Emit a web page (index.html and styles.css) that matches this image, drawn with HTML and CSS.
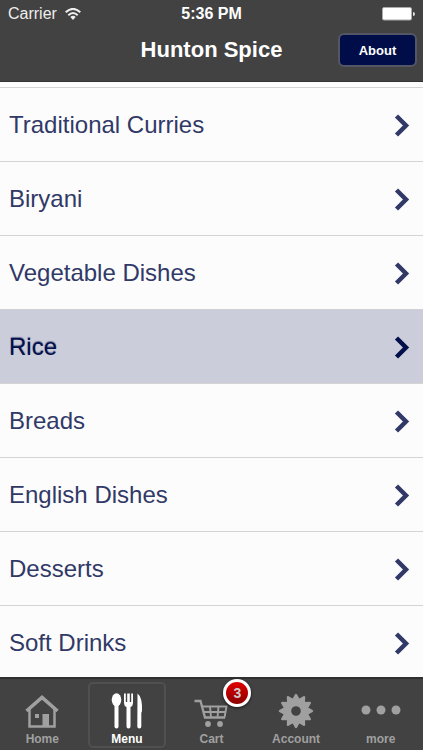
FILE: index.html
```html
<!DOCTYPE html>
<html lang="en">
<head>
<meta charset="utf-8">
<meta name="viewport" content="width=device-width, initial-scale=1">
<title>Hunton Spice</title>
<link rel="stylesheet" href="styles.css">
</head>
<body>
<svg class="defs" aria-hidden="true">
  <symbol id="chevron" viewBox="0 0 16 24"><path d="M2.500 3 12 12.500 2.500 22" fill="none" stroke="currentColor" stroke-width="4.500"/></symbol>
</svg>
<header class="header">
  <div class="status">
    <span class="carrier">Carrier
      <svg class="wifi" viewBox="0 0 16 12" aria-hidden="true"><g fill="none" stroke="currentColor" stroke-width="2"><path d="M.7 4.300Q8-2.500 15.300 4.300"/><path d="M3.300 7.200Q8 2.800 12.700 7.200"/></g><path d="M5.300 9Q8 6.600 10.700 9L8 11.900Z" fill="currentColor"/></svg>
    </span>
    <span class="time">5:36 PM</span>
    <svg class="battery" viewBox="0 0 33 14" aria-hidden="true"><rect x=".5" y=".5" width="29" height="12.500" rx="1.500" fill="#fff" stroke="#aaa"/><path d="M31 5q2 0 2 2t-2 2z" fill="#ddd"/></svg>
  </div>
  <div class="titlebar">
    <h1 class="title">Hunton Spice</h1>
    <button class="about" type="button">About</button>
  </div>
</header>
<main class="list">
  <a class="row" href="#"><span>Traditional Curries</span><svg class="chevron" aria-hidden="true"><use href="#chevron"/></svg></a>
  <a class="row" href="#"><span>Biryani</span><svg class="chevron" aria-hidden="true"><use href="#chevron"/></svg></a>
  <a class="row" href="#"><span>Vegetable Dishes</span><svg class="chevron" aria-hidden="true"><use href="#chevron"/></svg></a>
  <a class="row selected" href="#"><span>Rice</span><svg class="chevron" aria-hidden="true"><use href="#chevron"/></svg></a>
  <a class="row" href="#"><span>Breads</span><svg class="chevron" aria-hidden="true"><use href="#chevron"/></svg></a>
  <a class="row" href="#"><span>English Dishes</span><svg class="chevron" aria-hidden="true"><use href="#chevron"/></svg></a>
  <a class="row" href="#"><span>Desserts</span><svg class="chevron" aria-hidden="true"><use href="#chevron"/></svg></a>
  <a class="row" href="#"><span>Soft Drinks</span><svg class="chevron" aria-hidden="true"><use href="#chevron"/></svg></a>
</main>
<nav class="tabs">
  <a class="tab" href="#">
    <svg class="icon" viewBox="0 0 36 36" aria-hidden="true"><path d="M2.500 18 18 4.500 33.500 18" fill="none" stroke="currentColor" stroke-width="3.600"/><path d="M5.500 16V33.500H30.500V16" fill="none" stroke="currentColor" stroke-width="2.500"/><path d="M18.500 21h6.500v12.500h-6.500zM11 21h4v4h-4z" fill="currentColor"/></svg>
    <span>Home</span>
  </a>
  <a class="tab active" href="#" aria-current="page">
    <svg class="icon" viewBox="0 0 36 36" aria-hidden="true"><g fill="currentColor"><ellipse cx="7.500" cy="6.800" rx="4.800" ry="6.500"/><rect x="5.500" y="9" width="4" height="26.500" rx="2"/><path d="M15 .5h1.800v8.500h1.400V.5h2.600v8.500h1.400V.5H24v9.500q0 3-2.500 4V33.500a2 2 0 0 1-4 0V14Q15 13 15 10zM28.500 .5Q33.500 4 33 18l-.7 2V33.500a2 2 0 0 1-4 0z"/></g></svg>
    <span>Menu</span>
  </a>
  <a class="tab" href="#">
    <span class="cart">
      <svg class="icon" viewBox="0 0 36 36" aria-hidden="true"><g fill="none" stroke="currentColor" stroke-width="1.900"><path d="M1.500 8H7.500L12 24.500H32" stroke-width="2.300"/><path d="M9 13.500H33.500L31.500 24.500M10.500 19H32.500M17 13.500l1 11M25.500 13.500l-1 11"/></g><circle cx="15" cy="31" r="2.900" fill="currentColor"/><circle cx="27" cy="31" r="2.900" fill="currentColor"/></svg>
      <span class="badge">3</span>
    </span>
    <span>Cart</span>
  </a>
  <a class="tab" href="#">
    <svg class="icon" viewBox="-18 -18 36 36" aria-hidden="true"><path d="M0-16 2.900-10.700 8-13.800 7.800-7.800 13.800-8 10.700-2.900 16 0 10.700 2.900 13.800 8 7.800 7.800 8 13.800 2.900 10.700 0 16-2.900 10.700-8 13.800-7.800 7.800-13.800 8-10.700 2.900-16 0-10.700-2.900-13.800-8-7.800-7.800-8-13.800-2.900-10.700ZM6 0A6 6 0 1 0-6 0 6 6 0 1 0 6 0Z" fill="currentColor" fill-rule="evenodd" stroke="currentColor" stroke-width="2.400" stroke-linejoin="round"/></svg>
    <span>Account</span>
  </a>
  <a class="tab" href="#">
    <svg class="icon dots" viewBox="0 0 40 36" aria-hidden="true"><g fill="currentColor"><circle cx="5" cy="17" r="4.500"/><circle cx="20" cy="17" r="4.500"/><circle cx="35" cy="17" r="4.500"/></g></svg>
    <span>more</span>
  </a>
</nav>
</body>
</html>
```
FILE: styles.css
```css
* { box-sizing: border-box; }
body {
  margin: 0;
  height: 100vh;
  display: flex;
  flex-direction: column;
  overflow: hidden;
  background: #fcfcfc;
  font-family: "Liberation Sans", Arial, sans-serif;
}
a { color: inherit; text-decoration: none; }
.defs { display: none; }
.header { flex: none; background: #424242; color: #fff; border-bottom: 1px solid #333; padding-bottom: 14px; }
.status {
  display: grid;
  grid-template-columns: 1fr auto 1fr;
  align-items: center;
  height: 28px;
  padding: 0 8px;
  font-size: 16px;
}
.carrier { display: flex; align-items: center; gap: 8px; color: #eee; }
.wifi { width: 16px; height: 12px; }
.time { font-weight: bold; }
.battery { width: 33px; height: 14px; justify-self: end; }
.titlebar {
  display: grid;
  grid-template-columns: 1fr auto 1fr;
  align-items: center;
  padding: 5px 6px 0;
}
.title { grid-column: 2; margin: 0; font-size: 22px; line-height: 28px; }
.about {
  justify-self: end;
  width: 79px;
  height: 34px;
  padding: 0;
  border: 2px solid #555665;
  border-radius: 6px;
  background: #010d49;
  color: #fff;
  font: bold 13px "Liberation Sans", Arial, sans-serif;
}
.list { flex: 1; min-height: 0; overflow: hidden; padding-top: 5px; }
.row {
  display: flex;
  align-items: center;
  justify-content: space-between;
  height: 74px;
  padding: 0 13px 0 9px;
  border-top: 1px solid #d4d4d4;
  color: #313967;
  font-size: 24px;
}
.selected { background: #cbcdda; border-color: #d0d0d6; color: #020f4b; text-shadow: 0 -1px 1px #020f4b80; }
.chevron { width: 16px; height: 24px; }
.tabs {
  flex: none;
  display: grid;
  grid-template-columns: repeat(5, 1fr);
  height: 73px;
  padding: 3px 0 2px;
  border-top: 2px solid #303030;
  background: #424242;
  color: #a0a0a0;
  font-size: 12px;
  font-weight: bold;
  line-height: 14px;
}
.tab {
  display: flex;
  flex-direction: column;
  align-items: center;
  justify-content: space-between;
  margin: 0 3px;
  padding: 9px 0 0;
  border: 2px solid transparent;
  border-radius: 5px;
}
.active { border-color: #505050; color: #fff; }
.icon { display: block; width: 36px; height: 36px; }
.dots { width: 40px; }
.cart { position: relative; }
.badge {
  position: absolute;
  top: -14px;
  left: 30px;
  width: 28px;
  height: 28px;
  border: 3px solid #fff;
  border-radius: 50%;
  background: linear-gradient(#e00000, #8c0000);
  box-shadow: 0 1px 3px #000a;
  color: #ccc;
  font-size: 14px;
  line-height: 22px;
  text-align: center;
}
```
